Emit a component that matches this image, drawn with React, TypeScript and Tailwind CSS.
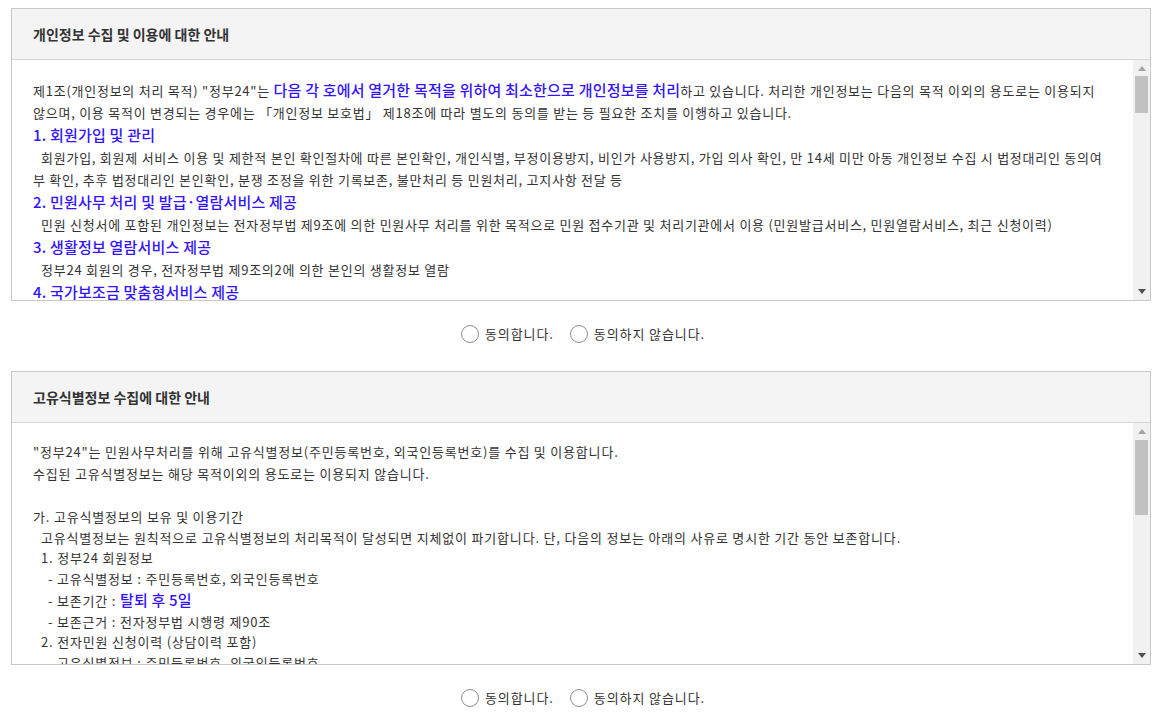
import React from "react";

const Blue = ({ children }: { children: React.ReactNode }) => (
  <span className="text-[15px] font-medium tracking-[0.2px] text-[#3414ff]">{children}</span>
);

const Scrollbar = ({ thumbTop, thumbH }: { thumbTop: string; thumbH: string }) => (
  <div className="w-[17px] shrink-0 bg-[#f1f1f1] flex flex-col items-center">
    <div className="h-[17px] w-full flex items-center justify-center">
      <svg width="8" height="5" viewBox="0 0 8 5">
        <polygon points="0,5 8,5 4,0" fill="#a3a3a3" />
      </svg>
    </div>
    <div className={`${thumbTop} ${thumbH} w-[13px] bg-[#c1c1c1]`} />
    <div className="flex-1" />
    <div className="h-[17px] w-full flex items-center justify-center">
      <svg width="8" height="5" viewBox="0 0 8 5">
        <polygon points="0,0 8,0 4,5" fill="#505050" />
      </svg>
    </div>
  </div>
);

const Radios = () => (
  <div className="w-[1140px] h-[70px] pb-[4px] pl-[4px] flex items-center justify-center text-[13px] tracking-[0.9px] text-[#333]">
    <div className="flex items-center gap-[6px]">
      <span className="w-[18px] h-[18px] rounded-full border border-[#8d8d8d] bg-white" />
      <span>동의합니다.</span>
    </div>
    <div className="flex items-center gap-[6px] ml-[16px]">
      <span className="w-[18px] h-[18px] rounded-full border border-[#8d8d8d] bg-white" />
      <span>동의하지 않습니다.</span>
    </div>
  </div>
);

const Header = ({ title }: { title: string }) => (
  <div className="h-[51px] bg-[#f4f4f4] border-b border-[#d6d6d6] flex items-center px-[21px] text-[14px] font-semibold text-[#333]">
    {title}
  </div>
);

export default function App() {
  return (
    <div
      className="w-[1173px] h-[720px] overflow-hidden bg-white pl-[11px] pt-[8px]"
      style={{ fontFamily: '"Noto Sans CJK KR", "Noto Sans", sans-serif' }}
    >
      <div className="w-[1140px] border border-[#c8c8c8]">
        <Header title="개인정보 수집 및 이용에 대한 안내" />
        <div className="h-[240px] flex">
          <div className="flex-1 overflow-hidden pl-[21px] pt-[19px] text-[13px] leading-[22px] text-[#333] whitespace-nowrap tracking-[0.75px]">
            <div>
              제1조(개인정보의 처리 목적) "정부24"는 <Blue>다음 각 호에서 열거한 목적을 위하여 최소한으로 개인정보를 처리</Blue>하고 있습니다. 처리한 개인정보는 다음의 목적 이외의 용도로는 이용되지
            </div>
            <div>않으며, 이용 목적이 변경되는 경우에는 「개인정보 보호법」 제18조에 따라 별도의 동의를 받는 등 필요한 조치를 이행하고 있습니다.</div>
            <div><Blue>1. 회원가입 및 관리</Blue></div>
            <div className="pl-[8px]">회원가입, 회원제 서비스 이용 및 제한적 본인 확인절차에 따른 본인확인, 개인식별, 부정이용방지, 비인가 사용방지, 가입 의사 확인, 만 14세 미만 아동 개인정보 수집 시 법정대리인 동의여</div>
            <div>부 확인, 추후 법정대리인 본인확인, 분쟁 조정을 위한 기록보존, 불만처리 등 민원처리, 고지사항 전달 등</div>
            <div><Blue>2. 민원사무 처리 및 발급·열람서비스 제공</Blue></div>
            <div className="pl-[8px]">민원 신청서에 포함된 개인정보는 전자정부법 제9조에 의한 민원사무 처리를 위한 목적으로 민원 접수기관 및 처리기관에서 이용 (민원발급서비스, 민원열람서비스, 최근 신청이력)</div>
            <div><Blue>3. 생활정보 열람서비스 제공</Blue></div>
            <div className="pl-[8px]">정부24 회원의 경우, 전자정부법 제9조의2에 의한 본인의 생활정보 열람</div>
            <div><Blue>4. 국가보조금 맞춤형서비스 제공</Blue></div>
            <div className="pl-[8px]">국가보조금 맞춤형서비스 제공을 위한 본인 확인 및 수혜 가능 서비스 안내</div>
          </div>
          <Scrollbar thumbTop="mt-[-1px]" thumbH="h-[37px]" />
        </div>
      </div>

      <Radios />

      <div className="w-[1140px] border border-[#c8c8c8]">
        <Header title="고유식별정보 수집에 대한 안내" />
        <div className="h-[241px] flex">
          <div className="flex-1 overflow-hidden pl-[21px] pt-[18px] text-[13px] text-[#333] whitespace-nowrap tracking-[0.8px]">
            <div className="leading-[22px]">
              <div>"정부24"는 민원사무처리를 위해 고유식별정보(주민등록번호, 외국인등록번호)를 수집 및 이용합니다.</div>
              <div>수집된 고유식별정보는 해당 목적이외의 용도로는 이용되지 않습니다.</div>
              <div>&nbsp;</div>
            </div>
            <div className="leading-[20.7px]">
              <div>가. 고유식별정보의 보유 및 이용기간</div>
              <div className="pl-[8px]">고유식별정보는 원칙적으로 고유식별정보의 처리목적이 달성되면 지체없이 파기합니다. 단, 다음의 정보는 아래의 사유로 명시한 기간 동안 보존합니다.</div>
              <div className="pl-[8px]">1. 정부24 회원정보</div>
              <div className="pl-[15px]">- 고유식별정보 : 주민등록번호, 외국인등록번호</div>
              <div className="pl-[15px]">- 보존기간 : <Blue>탈퇴 후 5일</Blue></div>
              <div className="pl-[15px]">- 보존근거 : 전자정부법 시행령 제90조</div>
              <div className="pl-[8px]">2. 전자민원 신청이력 (상담이력 포함)</div>
              <div className="pl-[15px]">- 고유식별정보 : 주민등록번호, 외국인등록번호</div>
              <div className="pl-[15px]">- 보존기간 : 5년</div>
            </div>
          </div>
          <Scrollbar thumbTop="mt-0" thumbH="h-[75px]" />
        </div>
      </div>

      <Radios />
    </div>
  );
}
